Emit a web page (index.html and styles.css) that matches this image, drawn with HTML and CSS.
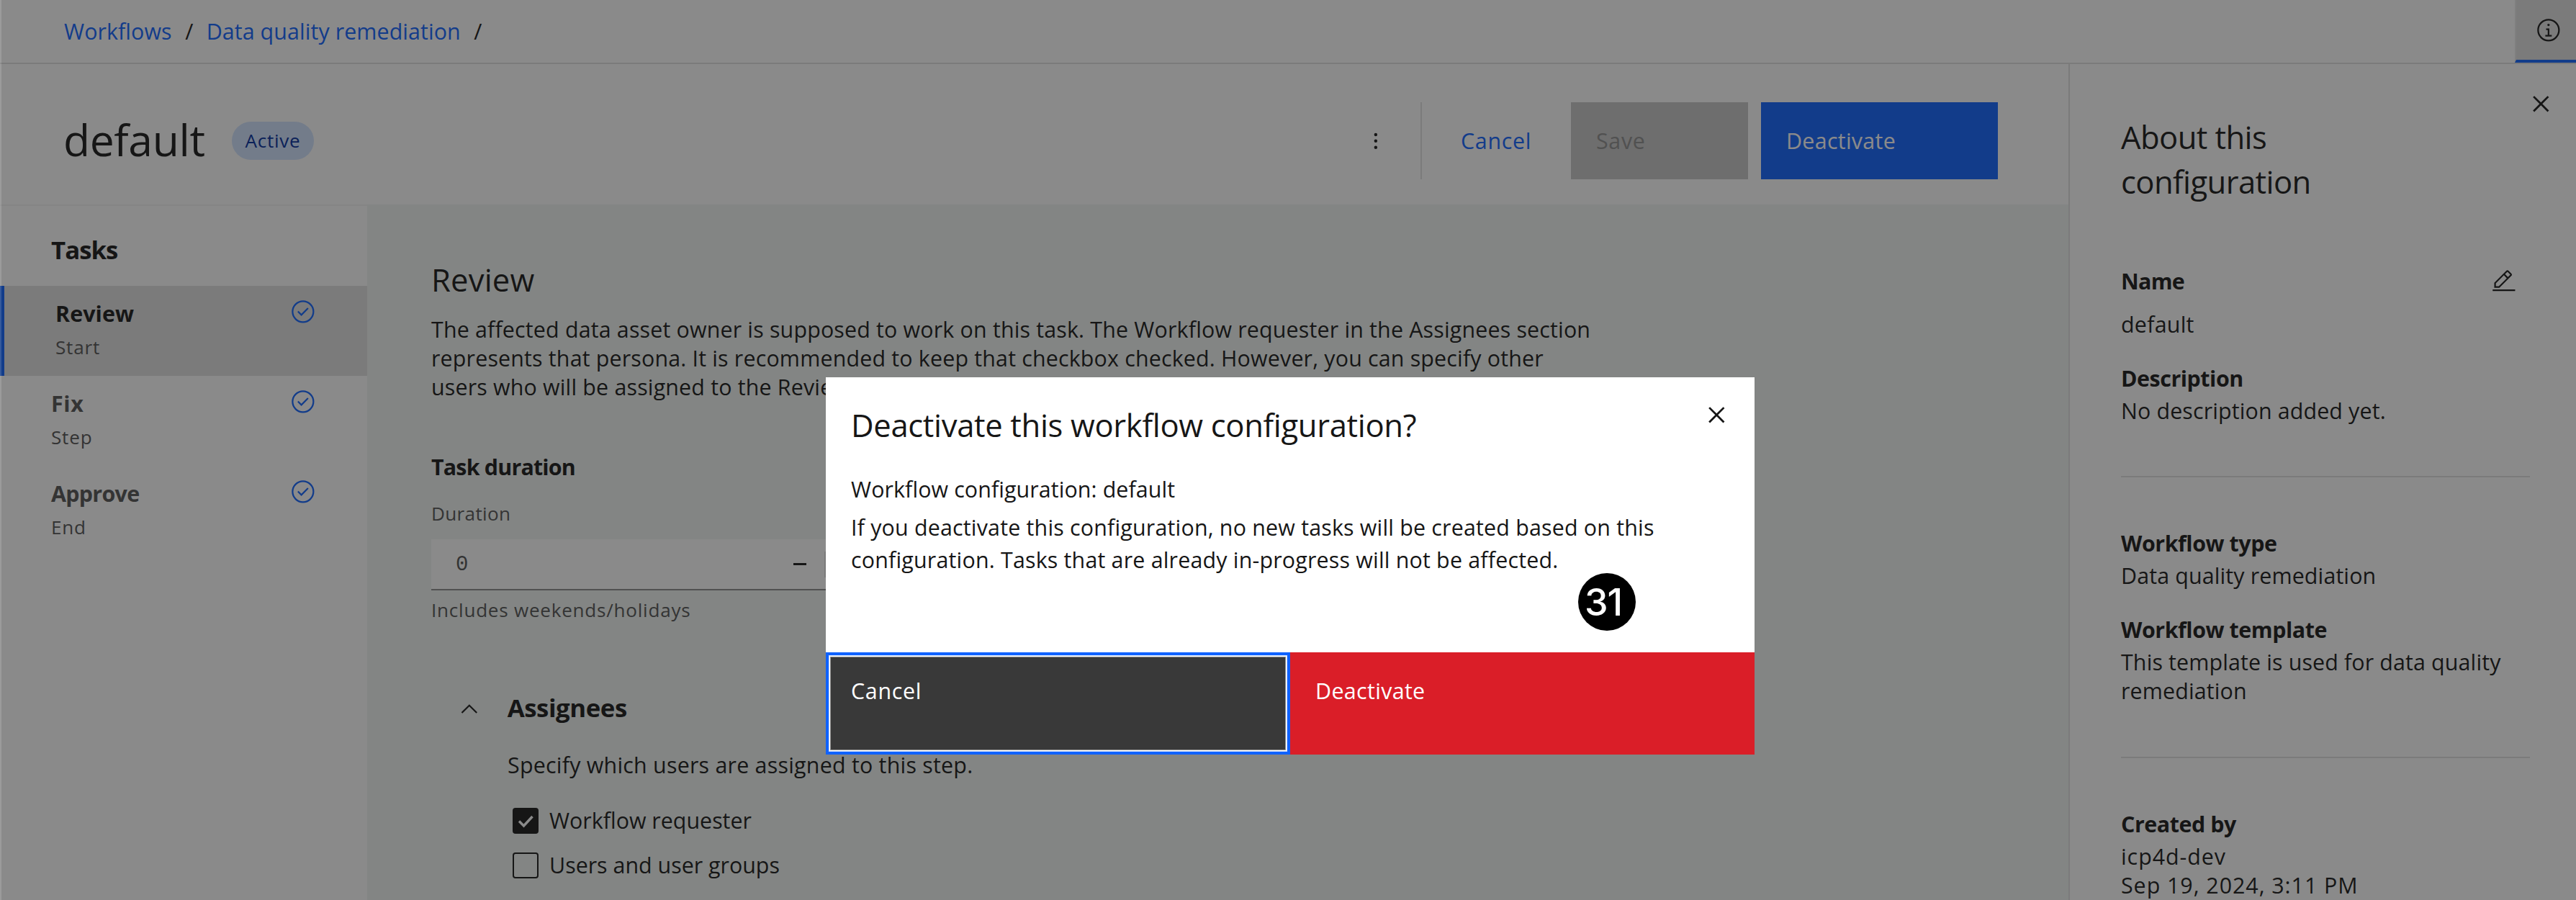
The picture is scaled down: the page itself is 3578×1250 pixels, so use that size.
FILE: index.html
```html
<!DOCTYPE html>
<html lang="en">
<head>
<meta charset="utf-8">
<title>Workflow configuration</title>
<link rel="stylesheet" href="styles.css">
</head>
<body>
<svg class="sprite" aria-hidden="true">
  <symbol id="i-check" viewBox="0 0 32 32"><path d="M14 21.414l-5-5.001L10.413 15 14 18.586 21.585 11 23 12.415z"/><path d="M16 2a14 14 0 1 0 14 14A14 14 0 0 0 16 2zm0 26a12 12 0 1 1 12-12 12 12 0 0 1-12 12z"/></symbol>
  <symbol id="i-close" viewBox="0 0 32 32"><path d="M17.414 16L24 9.414 22.586 8 16 14.586 9.414 8 8 9.414 14.586 16 8 22.586 9.414 24 16 17.414 22.586 24 24 22.586z"/></symbol>
</svg>
<div class="app">
  <header class="topbar">
    <nav class="breadcrumb">
      <a class="crumb crumb-first">Workflows</a><span class="slash">/</span><a class="crumb">Data quality remediation</a><span class="slash">/</span>
    </nav>
    <button class="info-btn"><svg class="icon" viewBox="0 0 32 32"><path d="M17 22v-8h-4v2h2v6h-3v2h8v-2zM16 8a1.5 1.5 0 1 0 1.5 1.5A1.5 1.5 0 0 0 16 8z"/><path d="M16 30a14 14 0 1 1 14-14 14 14 0 0 1-14 14zm0-26a12 12 0 1 0 12 12A12 12 0 0 0 16 4z"/></svg></button>
  </header>
  <div class="body">
    <div class="main">
      <header class="page-head">
        <h1 class="page-title">default</h1>
        <span class="tag">Active</span>
        <div class="actions">
          <svg class="icon kebab" viewBox="0 0 32 32"><circle cx="16" cy="8" r="2"/><circle cx="16" cy="16" r="2"/><circle cx="16" cy="24" r="2"/></svg>
          <a class="btn-ghost">Cancel</a>
          <button class="btn btn-save">Save</button>
          <button class="btn btn-primary">Deactivate</button>
        </div>
      </header>
      <div class="columns">
        <aside class="tasks">
          <h2 class="tasks-title">Tasks</h2>
          <div class="task task-active">
            <div><div class="task-name name-review">Review</div><div class="task-kind">Start</div></div>
            <svg class="icon icon-blue"><use href="#i-check"/></svg>
          </div>
          <div class="task">
            <div><div class="task-name name-fix">Fix</div><div class="task-kind">Step</div></div>
            <svg class="icon icon-blue"><use href="#i-check"/></svg>
          </div>
          <div class="task">
            <div><div class="task-name name-approve">Approve</div><div class="task-kind">End</div></div>
            <svg class="icon icon-blue"><use href="#i-check"/></svg>
          </div>
        </aside>
        <section class="content">
          <h2 class="section-title">Review</h2>
          <p class="intro">The affected data asset owner is supposed to work on this task. The Workflow requester in the Assignees section<br>represents that persona. It is recommended to keep that checkbox checked. However, you can specify other<br>users who will be assigned to the Review task.</p>
          <h3 class="sub-title">Task duration</h3>
          <label class="field-label">Duration</label>
          <div class="number">
            <span class="number-value">0</span>
            <span class="step step-minus"></span>
            <span class="step"></span>
          </div>
          <div class="helper">Includes weekends/holidays</div>
          <div class="accordion">
            <svg class="icon chevron" viewBox="0 0 32 32"><path d="M16 10L26 20 24.6 21.4 16 12.8 7.4 21.4 6 20z"/></svg>
            <h3 class="accordion-title">Assignees</h3>
          </div>
          <div class="panel">
            <p class="panel-text">Specify which users are assigned to this step.</p>
            <label class="check"><span class="box box-on"><svg class="tick" viewBox="0 0 36 36"><path d="M9 18.500L15.500 25 27.500 12"/></svg></span>Workflow requester</label>
            <label class="check"><span class="box"></span>Users and user groups</label>
          </div>
        </section>
      </div>
    </div>
    <aside class="about">
      <div class="about-head">
        <h2 class="about-title">About this<br>configuration</h2>
        <svg class="icon-close"><use href="#i-close"/></svg>
      </div>
      <div class="group group-first">
        <div class="name-row"><h3 class="label label-name">Name</h3><svg class="icon" viewBox="0 0 32 32"><path d="M2 26h28v2H2zM25.400 9c.8-.8.8-2 0-2.800l-3.600-3.600c-.8-.8-2-.8-2.800 0l-15 15V24h6.400zM20.400 4L24 7.600l-3 3L17.400 7zM6 22v-3.600l10-10 3.600 3.600-10 10z"/></svg></div>
        <p class="value value-name">default</p>
        <h3 class="label label-next">Description</h3>
        <p class="value">No description added yet.</p>
      </div>
      <div class="group">
        <h3 class="label">Workflow type</h3>
        <p class="value">Data quality remediation</p>
        <h3 class="label label-next">Workflow template</h3>
        <p class="value">This template is used for data quality<br>remediation</p>
      </div>
      <div class="group">
        <h3 class="label">Created by</h3>
        <p class="value value-wide">icp4d-dev<br>Sep 19, 2024, 3:11 PM</p>
      </div>
    </aside>
  </div>
  <div class="overlay">
    <div class="modal">
      <div class="modal-body">
        <div class="modal-head">
          <h2 class="modal-title">Deactivate this workflow configuration?</h2>
          <svg class="icon-close"><use href="#i-close"/></svg>
        </div>
        <p class="modal-label">Workflow configuration: default</p>
        <p class="modal-text">If you deactivate this configuration, no new tasks will be created based on this<br>configuration. Tasks that are already in-progress will not be affected.</p>
      </div>
      <div class="modal-foot">
        <button class="modal-btn modal-cancel">Cancel</button>
        <button class="modal-btn modal-danger">Deactivate</button>
      </div>
      <span class="step-badge">31</span>
    </div>
  </div>
  <div class="edge"></div>
</div>
</body>
</html>
```
FILE: styles.css
```css
* { box-sizing: border-box; }
body {
  margin: 0;
  font-family: "Open Sans", "Noto Sans", sans-serif;
  font-size: 30.4px;
  line-height: 40px;
  letter-spacing: 0.17px;
  color: #161616;
}
h1, h2, h3, p { margin: 0; font-size: inherit; font-weight: 400; }
button { border: 0; padding: 0; font: inherit; letter-spacing: inherit; text-align: left; color: inherit; }
.sprite { display: none; }
.app {
  position: relative;
  width: 3578px;
  height: 1250px;
  overflow: hidden;
  display: flex;
  flex-direction: column;
  background: #fff;
}
.icon { display: block; flex: none; width: 35.7px; height: 35.7px; fill: #161616; }
.icon-blue { fill: #0f62fe; }
.icon-close { display: block; flex: none; width: 44.6px; height: 44.6px; fill: #161616; }

/* Top bar */
.topbar {
  flex: none;
  height: 89px;
  border-bottom: 2px solid #e0e0e0;
  padding-left: 89px;
  display: flex;
  align-items: stretch;
  justify-content: space-between;
}
.breadcrumb { display: flex; align-items: center; letter-spacing: 0.08px; }
.crumb { color: #0f62fe; }
.slash { width: 11px; margin: 0 18.5px; }
.info-btn {
  width: 85px;
  padding-left: 27px;
  background: #e0e0e0;
  border-left: 2px solid #e8e8e8;
  border-bottom: 4px solid #0f62fe;
  display: flex;
  align-items: center;
}

.body { flex: 1; min-height: 0; display: flex; }
.main { width: 2873px; display: flex; flex-direction: column; }

/* Page header */
.page-head {
  flex: none;
  height: 195px;
  padding: 53px 98px 0 88px;
  display: flex;
  align-items: flex-start;
}
.page-title { width: 234px; margin-top: 12px; font-size: 60.6px; line-height: 80px; letter-spacing: -0.37px; }
.tag {
  width: 114px;
  height: 53px;
  margin-top: 27px;
  border-radius: 27px;
  background: #d0e2ff;
  color: #002d9c;
  font-size: 26.1px;
  line-height: 53px;
  letter-spacing: 0.7px;
  text-align: center;
}
.actions { margin-left: auto; height: 107px; line-height: 107px; display: flex; align-items: center; }
.kebab { margin-right: 44px; }
.btn-ghost { width: 209px; height: 107px; border-left: 2px solid #e0e0e0; padding-left: 54px; color: #0f62fe; letter-spacing: 0.7px; }
.btn { height: 107px; padding-left: 35px; }
.btn-save { width: 246px; background: #c6c6c6; color: #8d8d8d; letter-spacing: 0.7px; }
.btn-primary { width: 329px; margin-left: 18px; background: #0f62fe; color: #fff; letter-spacing: 0.3px; }

/* Task list */
.columns { flex: 1; min-height: 0; display: flex; }
.tasks { width: 510px; border-top: 2px solid #f4f4f4; }
.tasks-title { margin: 39px 0 28px 71px; height: 44px; font-size: 34.8px; line-height: 44px; font-weight: 700; letter-spacing: -1px; }
.task { height: 125px; padding: 18px 71px 0 71px; display: flex; justify-content: space-between; color: #525252; }
.task-active { background: #e0e0e0; border-left: 6px solid #0f62fe; }
.task-name { margin-top: 1px; font-weight: 700; }
.task-active .task-name { color: #161616; }
.name-review { letter-spacing: 0.1px; }
.name-fix { letter-spacing: 0.6px; }
.name-approve { letter-spacing: -0.7px; }
.task-kind { margin-top: 8px; font-size: 26.1px; line-height: 36px; letter-spacing: 0.8px; }

/* Task form */
.content { flex: 1; padding: 76px 0 0 89px; background: #f0f5f2; overflow: hidden; white-space: nowrap; }
.section-title { font-size: 43.6px; line-height: 56px; }
.intro { margin-top: 22px; }
.sub-title { margin-top: 71px; font-weight: 700; letter-spacing: -0.8px; }
.field-label { display: block; margin-top: 26px; font-size: 26.1px; line-height: 36px; letter-spacing: 0.33px; color: #525252; }
.number {
  width: 620px;
  height: 71px;
  margin-top: 18px;
  background: #fff;
  border-bottom: 2px solid #8d8d8d;
  display: flex;
  align-items: center;
}
.number-value { width: 477px; padding: 2px 0 0 34px; font-family: "Liberation Mono", monospace; font-size: 29px; color: #525252; }
.step { width: 71px; height: 36px; display: flex; align-items: center; justify-content: center; }
.step-minus { border-right: 2px solid #e0e0e0; }
.step-minus::before { content: ""; width: 18px; height: 2.4px; background: #161616; }
.helper { margin-top: 9px; font-size: 26.1px; line-height: 36px; letter-spacing: 0.75px; color: #525252; }
.accordion { margin: 95px 0 0 35px; height: 44px; display: flex; align-items: flex-start; }
.chevron { margin: 7px 35px 0 0; }
.accordion-title { margin-top: 1px; font-size: 34.8px; line-height: 44px; font-weight: 700; letter-spacing: -0.45px; }
.panel { padding-left: 106px; }
.panel-text { margin-top: 39px; margin-bottom: 37px; letter-spacing: 0.23px; }
.check { height: 40px; margin: 0 0 22px 7px; padding-top: 0.5px; display: flex; align-items: center; gap: 15px; letter-spacing: 0; }
.box { width: 36px; height: 36px; border: 2px solid #161616; border-radius: 4px; }
.box-on { border: 0; background: #161616; }
.tick { display: block; fill: none; stroke: #fff; stroke-width: 3.4; }

/* Side panel */
.about { width: 705px; padding: 33px 64px 0 71px; border-left: 2px solid #e0e0e0; white-space: nowrap; }
.about-head { display: flex; justify-content: space-between; margin-right: -37.5px; }
.about-title { margin-top: 37px; font-size: 43.6px; line-height: 62px; letter-spacing: -0.6px; }
.group { padding: 72px 0 71px; border-bottom: 2px solid #e0e0e0; }
.group-first { padding: 88px 0 70px; }
.name-row { height: 40px; padding-right: 18px; display: flex; align-items: center; justify-content: space-between; }
.label { font-weight: 700; letter-spacing: -0.45px; }
.label-name { letter-spacing: -0.7px; }
.label-next { margin-top: 35px; }
.value { margin-top: 5px; letter-spacing: 0.13px; }
.value-name { margin-top: 20px; letter-spacing: 0.25px; }
.value-wide { letter-spacing: 0.95px; }

/* Dialog */
.overlay { position: absolute; inset: 0; padding: 524px 0 0 1147px; background: rgba(22, 22, 22, 0.5); }
.modal { position: relative; width: 1290px; height: 524px; background: #fff; white-space: nowrap; }
.modal-body { height: 382px; padding: 30px 30px 0 35px; }
.modal-head { display: flex; justify-content: space-between; }
.modal-title { margin-top: 8px; font-size: 43.6px; line-height: 56px; letter-spacing: -0.34px; }
.modal-label { margin-top: 39px; line-height: 45px; letter-spacing: 0.09px; }
.modal-text { margin-top: 8px; line-height: 45px; letter-spacing: 0.19px; }
.modal-foot { height: 142px; display: flex; }
.modal-btn { width: 645px; height: 142px; padding: 34px 0 0 35px; display: flex; align-items: flex-start; color: #fff; }
.modal-cancel {
  background: #393939;
  box-shadow: inset 0 0 0 4px #0f62fe, inset 0 0 0 5px #cfdfff, inset 0 0 0 6px #fff, inset 0 0 0 7px #8d8d8d;
  letter-spacing: 0.7px;
}
.modal-danger { background: #da1e28; letter-spacing: 0.35px; }
.step-badge {
  position: absolute;
  left: 1045px;
  top: 272px;
  width: 80px;
  height: 80px;
  padding-left: 9px;
  border-radius: 50%;
  background: #000;
  color: #fff;
  font-family: Inter, sans-serif;
  font-size: 52px;
  font-weight: 500;
  line-height: 81px;
  letter-spacing: -1px;
}
.edge { position: absolute; left: 0; top: 0; width: 2px; height: 1250px; background: rgba(255, 255, 255, 0.15); }
```
